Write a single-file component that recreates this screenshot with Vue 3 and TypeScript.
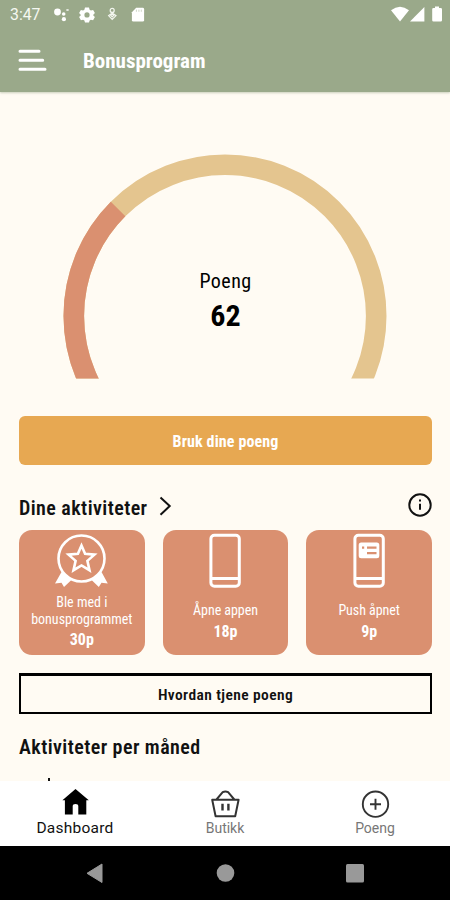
<script setup lang="ts">
interface Activity {
  icon: 'badge' | 'phone' | 'push'
  lines: string[]
  points: string
}

const activities: Activity[] = [
  { icon: 'badge', lines: ['Ble med i', 'bonusprogrammet'], points: '30p' },
  { icon: 'phone', lines: ['Åpne appen'], points: '18p' },
  { icon: 'push', lines: ['Push åpnet'], points: '9p' },
]
</script>

<template>
  <div class="screen">
    <header class="top">
      <div class="status">
        <span class="time">3:47</span>
        <svg class="status-icons" width="96" height="20" viewBox="50 5 96 20" fill="#fff">
          <circle cx="57.5" cy="12" r="3.4" /><circle cx="63.7" cy="14" r="1.8" />
          <circle cx="63.9" cy="19.2" r="2.1" /><ellipse cx="67.5" cy="10" rx="1.5" ry=".8" />
          <path fill-rule="evenodd" d="M85 7.5h4l.6 2.2 1.3.8 2.2-.6 1.8 3.2-1.6 1.6v.8l1.6 1.6-1.8 3.2-2.2-.6-1.3.8-.6 2h-4l-.6-2-1.3-.8-2.2.6-1.8-3.2 1.6-1.6v-.8l-1.6-1.6 1.8-3.2 2.2.6 1.3-.8zM87 12.3a2.6 2.6 0 1 0 0 5.2 2.6 2.6 0 0 0 0-5.2z" />
          <g fill="none" stroke="#f3f6ef" stroke-width="1.2">
            <circle cx="112.2" cy="10.4" r="2" />
            <path d="M113.4 12.2l-4.8 3.4 3.6 3.9 3.8-3.9-4.9-3.4M110.7 15.3l1.5 1.5 1.6-1.5-1.6-1.3z" />
          </g>
          <path d="M136.2 7.8h6.5q1.4 0 1.4 1.4v11q0 1.4-1.4 1.4h-9.4q-1.4 0-1.4-1.4v-8z" />
          <path d="M136.4 9.6v2.2M138.9 9.6v2.2M141.3 9.6v2.2" stroke="#c3cdb9" stroke-width=".8" />
        </svg>
        <svg class="signals" width="54" height="20" viewBox="390 5 54 20" fill="#fff">
          <path d="M391 10.3q9-7 18 0l-9 11.2z" /><path d="M424.4 7v14.5H410z" />
          <path d="M435 6.5h4v1.4h1.7q1.3 0 1.3 1.3v11q0 1.3-1.3 1.3h-7.2q-1.3 0-1.3-1.3v-11q0-1.3 1.3-1.3h1.5z" />
        </svg>
      </div>
      <div class="bar">
        <svg width="30" height="24" viewBox="0 0 30 24" stroke="#fff" stroke-width="3" stroke-linecap="round">
          <path d="M3 3.3h19M3 12.3h22.7M3 21.3h25" />
        </svg>
        <h1><span class="t">Bonusprogram</span></h1>
      </div>
    </header>

    <main>
      <section class="gauge">
        <svg width="325" height="229" viewBox="62.5 150 325 229" fill="none" stroke-width="20.6">
          <clipPath id="gaugeClip"><rect x="60" y="150" width="330" height="228.5" /></clipPath>
          <g clip-path="url(#gaugeClip)">
            <circle cx="225.5" cy="316" r="151.2" stroke="#e4c58f" />
            <path d="M118.58 209.08A151.2 151.2 0 0 0 118.58 422.92" stroke="#da9070" />
          </g>
        </svg>
        <div class="score">
          <span class="t">Poeng</span>
          <strong class="t">62</strong>
        </div>
      </section>

      <button class="spend"><span class="t">Bruk dine poeng</span></button>

      <div class="section-head">
        <h2><span class="t">Dine aktiviteter</span></h2>
        <svg class="chevron" width="14" height="20" viewBox="0 0 14 20" fill="none" stroke="#111" stroke-width="2"><path d="M1.5 1.5l9.2 8.6-9.2 8.6" /></svg>
        <svg class="info" width="26" height="26" viewBox="0 0 26 26" fill="none" stroke="#111" stroke-width="2">
          <circle cx="13" cy="13" r="10.7" /><path d="M13 11.7v6.1M13 7.6v2" />
        </svg>
      </div>

      <div class="cards">
        <article v-for="a in activities" :key="a.icon" class="card">
          <svg v-if="a.icon === 'badge'" class="icon" width="56" height="60" viewBox="53.5 530 56 60" fill="none" stroke="#fff" stroke-width="2.6">
            <path fill="#fff" stroke="none" d="M61 572l-6.5 11.5 6.5-.8 2.5 4.3 8.5-8zM101 572l6.3 11.5-6.3-.8-2.7 4.3-8.3-8z" />
            <circle cx="81" cy="558.5" r="23" />
            <path d="M81 545.5l3.6 8.2 9.4.9-7.1 6.3 2.1 9.3-8-4.8-8 4.8 2.1-9.3-7.1-6.3 9.4-.9z" />
          </svg>
          <svg v-else class="icon" width="34" height="60" viewBox="209 530 34 60" fill="none" stroke="#fff" stroke-width="3">
            <rect x="211.9" y="535.2" width="28.4" height="51" rx="3.5" /><path d="M212 578.5h28" />
            <g v-if="a.icon === 'push'" stroke="none" fill="#fff">
              <rect x="215.7" y="542.5" width="20.6" height="15.8" rx="2.5" />
              <path d="M219 546.5h2.2v2.2h-2.2zM224 546.5h9.5v2.2H224zM224 552h9.5v2.2H224z" fill="#da9070" />
            </g>
          </svg>
          <p class="caption" :class="{ single: a.lines.length === 1 }">
            <span v-for="line in a.lines" :key="line" class="t">{{ line }}</span>
          </p>
          <strong class="t points">{{ a.points }}</strong>
        </article>
      </div>

      <button class="how"><span class="t">Hvordan tjene poeng</span></button>
      <h2 class="monthly"><span class="t">Aktiviteter per måned</span></h2>
      <i class="axis"></i>
    </main>

    <nav class="tabs">
      <a class="tab active">
        <svg width="30" height="30" viewBox="60 786 30 30"><path d="M75.5 789l13.3 11.3h-2.5v14.2h-8v-8.2q0-2.3-2.8-2.3t-2.8 2.3v8.2h-7.8v-14.2h-2.5z" /></svg>
        <span>Dashboard</span>
      </a>
      <a class="tab">
        <svg width="30" height="30" viewBox="210 786 30 30" fill="none" stroke="#333" stroke-width="2" stroke-linejoin="round">
          <path d="M212.2 799.7h26.4l-3.4 16.6h-19.6zM216.5 799.5l6.2-7.3q2.7-1.4 5.4 0l6.2 7.3" /><path d="M222.5 803.8v6.6M228.4 803.8v6.6" stroke-width="2.4" />
        </svg>
        <span>Butikk</span>
      </a>
      <a class="tab">
        <svg width="30" height="30" viewBox="360 786 30 30" fill="none" stroke="#333" stroke-width="1.9">
          <circle cx="375.5" cy="804.2" r="12.7" /><path d="M375.5 798.7v11M370 804.2h11" />
        </svg>
        <span>Poeng</span>
      </a>
    </nav>
    <footer class="system">
      <svg width="450" height="54" viewBox="0 846 450 54" fill="#999">
        <path d="M102 864v18.5l-15-9.2z" stroke="#999" stroke-linejoin="round" /><circle cx="225.5" cy="873" r="8.8" /><rect x="346" y="864" width="18" height="18.5" rx="1.5" />
      </svg>
    </footer>
  </div>
</template>

<style>
body { margin: 0; }
</style>
<style scoped>
* { box-sizing: border-box; }
.screen { width: 450px; height: 900px; display: flex; flex-direction: column; overflow: hidden; background: #fffbf3; color: #111; font-family: "Roboto Condensed", Roboto, sans-serif; }
.top { height: 92px; flex: none; background: #9aa98a; box-shadow: 0 1px 2px #9aa98a88; color: #fff; }
.status { height: 30px; display: flex; align-items: center; padding: 0 6px 0 10px; }
.time { width: 40px; font: 15.8px/30px Roboto, sans-serif; color: #f5f8f1; }
.signals { margin-left: auto; }
.bar { display: flex; align-items: center; height: 60px; padding-left: 17px; gap: 36px; }
h1, h2, p { margin: 0; }
h1 { font-size: 21px; line-height: 30px; font-weight: 700; padding-top: 1px; }
.t { display: inline-block; white-space: nowrap; font-stretch: 75%; }
main { flex: 1; min-height: 0; overflow: hidden; display: flex; flex-direction: column; padding: 0 18px 0 19px; }
.gauge { height: 323px; flex: none; display: grid; padding: 58px 0 0 43px; grid-template-columns: 325px; grid-template-rows: 229px; }
.gauge > * { grid-area: 1 / 1; }
.score { display: flex; flex-direction: column; align-items: center; padding: 116px 0 0 2px; color: #000; }
.score span { font-size: 20px; line-height: 30px; letter-spacing: .45px; }
.score strong { font-size: 30px; line-height: 39px; }
button { font-family: inherit; padding: 0; border: 0; flex: none; }
.spend { margin-top: 1px; height: 49px; border-radius: 6px; background: #e7a852; color: #fff; font-size: 16px; font-weight: 700; line-height: 20px; letter-spacing: .12px; padding-top: 2px; }
.section-head { height: 65px; flex: none; display: flex; align-items: center; padding-top: 17px; }
h2 { font-size: 20px; line-height: 26px; font-weight: 600; letter-spacing: .43px; padding-top: 3px; }
.chevron { margin-left: 11px; }
.info { margin-left: auto; margin-right: -1px; margin-top: -2px; }
.cards { display: grid; grid-template-columns: repeat(3, 1fr); gap: 18px; height: 125px; flex: none; }
.card { background: #da9070; border-radius: 13px; color: #fff; display: flex; flex-direction: column; align-items: center; }
.icon { flex: none; }
.caption { display: flex; flex-direction: column; align-items: center; font-size: 14px; line-height: 16.5px; padding-top: 4px; }
.caption.single { padding-top: 12px; letter-spacing: -.05px; }
.points { font-size: 16px; line-height: 20px; margin-top: 3px; }
.how { margin-top: 18px; height: 41px; border: 2.5px solid #000; border-top-width: 3px; background: transparent; color: #111; font-size: 15.5px; font-weight: 600; letter-spacing: .4px; padding-top: 1px; }
.monthly { margin-top: 17px; }
.axis { width: 2px; height: 3px; flex: none; background: #111; margin: 18px 0 0 29px; }
.tabs { height: 65px; flex: none; display: grid; grid-template-columns: repeat(3, 1fr); background: #fff; }
.tab { display: flex; flex-direction: column; align-items: center; padding-top: 5px; font: 14px/25px Roboto, sans-serif; color: #777; }
.tab.active { color: #111; font-size: 15.5px; letter-spacing: .25px; }
.system { height: 54px; flex: none; background: #000; }
svg { display: block; overflow: visible; }
</style>
